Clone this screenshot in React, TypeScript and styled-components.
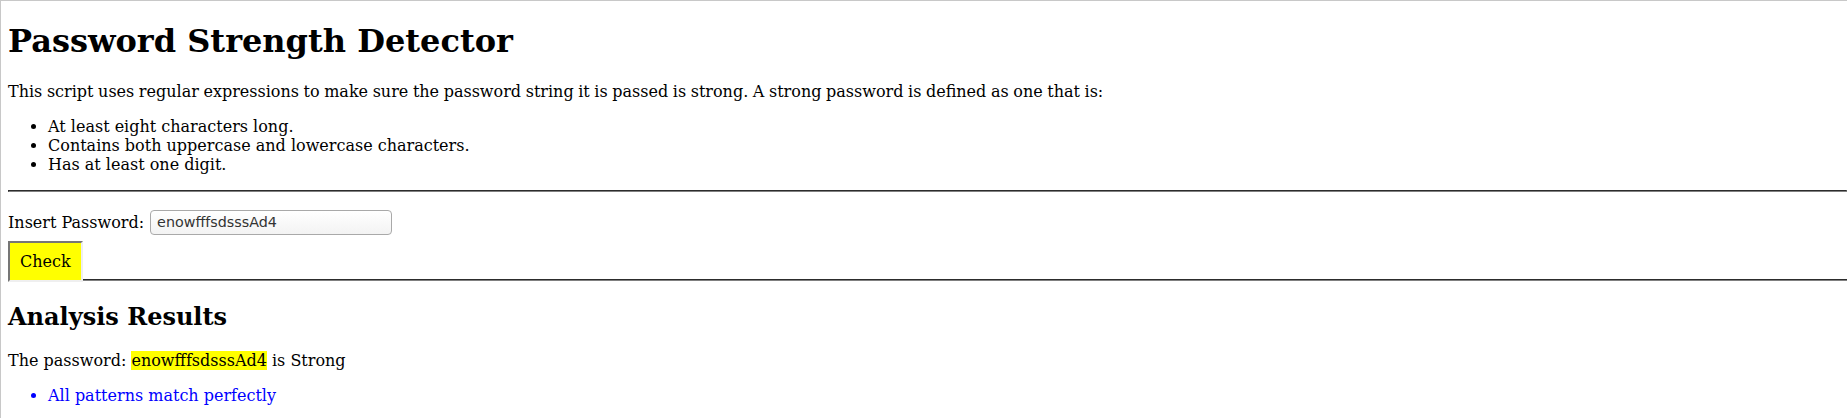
import React from "react";
import styled, { createGlobalStyle } from "styled-components";

const GlobalStyle = createGlobalStyle`
  html, body {
    margin: 0;
    padding: 0;
    background: #ffffff;
  }
  body {
    font-family: "DejaVu Serif", serif;
    font-size: 16px;
    color: #000000;
  }
`;

const Frame = styled.div`
  box-sizing: border-box;
  min-height: 100vh;
  border-top: 1px solid #c8c8c8;
  border-left: 1px solid #c8c8c8;
  padding: 0 0 1px 7px;
  overflow: hidden;
`;

const Title = styled.h1`
  font-size: 32px;
  font-weight: bold;
  margin: 21.44px 0;
`;

const Paragraph = styled.p<{ $tight?: boolean }>`
  margin: 16px 0;
  word-spacing: ${(p) => (p.$tight ? "-0.5px" : "normal")};
`;

const BulletList = styled.ul<{ $tone?: string }>`
  margin: 16px 0;
  padding-left: 40px;
  color: ${(p) => p.$tone ?? "#000000"};
`;

const Rule = styled.hr`
  margin: 8px 0;
  border-style: inset;
  border-width: 1px;
  color: gray;
  border-color: gray;
  height: 0;
`;

const PasswordForm = styled.form`
  margin: 0;
`;

const FieldRow = styled.div`
  display: flex;
  align-items: center;
  gap: 6px;
  margin: 18px 0 6px;
`;

const FieldLabel = styled.label`
  font-size: 16px;
`;

const PasswordInput = styled.input`
  box-sizing: border-box;
  width: 242px;
  height: 25px;
  padding: 0 6px;
  border: 1px solid #a9a9a9;
  border-radius: 4px;
  background: linear-gradient(#ffffff, #f3f3f3);
  font-family: "DejaVu Sans", sans-serif;
  font-size: 14.3px;
  color: #333333;
  outline: none;
`;

const ButtonBar = styled.div`
  display: flex;
  align-items: flex-end;
`;

const CheckButton = styled.button`
  flex: none;
  margin: 0;
  padding: 9px 10px;
  background: #ffff00;
  border-style: solid;
  border-width: 2px;
  border-color: #767676 #efefef #efefef #767676;
  font-family: "DejaVu Serif", serif;
  font-size: 16px;
  line-height: 19px;
  color: #000000;
`;

const BarRule = styled.div`
  flex: 1;
  height: 0;
  margin-bottom: 1px;
  border-top: 1px inset gray;
  border-bottom: 1px inset gray;
`;

const SectionTitle = styled.h2`
  font-size: 24px;
  font-weight: bold;
  margin: 19.92px 0;
`;

const Highlight = styled.span`
  background: #ffff00;
`;

export default function App() {
  const password = "enowfffsdsssAd4";
  return (
    <>
      <GlobalStyle />
      <Frame>
        <Title>Password Strength Detector</Title>
        <Paragraph $tight>
          This script uses regular expressions to make sure the password string it is passed is
          strong. A strong password is defined as one that is:
        </Paragraph>
        <BulletList>
          <li>At least eight characters long.</li>
          <li>Contains both uppercase and lowercase characters.</li>
          <li>Has at least one digit.</li>
        </BulletList>
        <Rule />
        <PasswordForm onSubmit={(e) => e.preventDefault()}>
          <FieldRow>
            <FieldLabel htmlFor="pw">Insert Password:</FieldLabel>
            <PasswordInput id="pw" type="text" defaultValue={password} />
          </FieldRow>
          <ButtonBar>
            <CheckButton type="submit">Check</CheckButton>
            <BarRule />
          </ButtonBar>
        </PasswordForm>
        <SectionTitle>Analysis Results</SectionTitle>
        <Paragraph>
          The password: <Highlight>{password}</Highlight> is Strong
        </Paragraph>
        <BulletList $tone="#0000ff">
          <li>All patterns match perfectly</li>
        </BulletList>
      </Frame>
    </>
  );
}
